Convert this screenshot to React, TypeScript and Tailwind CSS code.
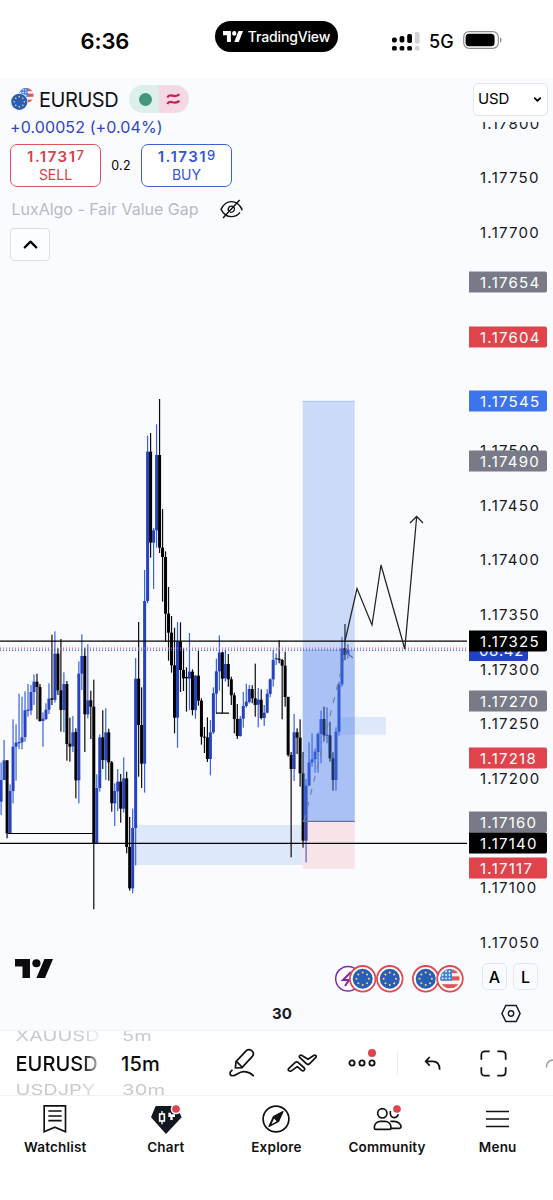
import React from 'react';
import { ChevronDown, ChevronUp } from 'lucide-react';

// [high, bodyTop, bodyBottom, low, isUp] in third-pixels measured from y = 590
type Candle = [number, number, number, number, 0 | 1];

const CANDLES: Candle[] = [
  [517, 570, 635, 675, 1], [450, 511, 570, 570, 1], [511, 511, 730, 745, 0], [583, 603, 730, 730, 1],
  [388, 470, 603, 640, 1], [403, 458, 470, 572, 1], [311, 456, 460, 477, 1], [320, 442, 457, 478, 1],
  [304, 361, 441, 455, 1], [282, 359, 363, 380, 1], [285, 306, 361, 375, 1], [253, 275, 306, 345, 1],
  [251, 275, 291, 388, 0], [282, 291, 393, 395, 0], [367, 386, 393, 470, 1], [340, 359, 387, 390, 1],
  [280, 326, 359, 372, 1], [134, 325, 329, 345, 0], [124, 191, 330, 338, 1], [175, 191, 301, 315, 0],
  [147, 301, 360, 425, 0], [247, 282, 360, 427, 1], [273, 282, 462, 512, 0], [383, 461, 470, 515, 0],
  [378, 427, 469, 486, 1], [415, 426, 571, 625, 0], [214, 251, 571, 640, 1], [133, 198, 251, 300, 1],
  [173, 198, 373, 486, 0], [163, 331, 373, 385, 1], [302, 331, 350, 447, 0], [269, 350, 760, 958, 0],
  [553, 594, 760, 760, 1], [433, 442, 594, 605, 1], [361, 442, 510, 537, 0], [355, 427, 511, 570, 1],
  [416, 427, 517, 572, 0], [513, 517, 640, 665, 0], [580, 603, 640, 708, 1], [537, 575, 604, 663, 1],
  [552, 575, 656, 698, 0], [502, 565, 656, 668, 1], [545, 565, 771, 790, 0], [681, 771, 895, 902, 0],
  [656, 714, 895, 910, 1], [204, 266, 714, 826, 1], [96, 266, 405, 560, 0], [292, 405, 521, 594, 0],
  [-60, 33, 521, 608, 1], [-463, -415, 33, 40, 1], [-471, -415, -142, -97, 0], [-186, -179, -142, -3, 1],
  [-497, -405, -179, -127, 1], [-573, -405, -127, -111, 0], [-243, -127, -99, 35, 0], [-116, -99, 71, 155, 0],
  [-9, 71, 128, 212, 0], [78, 128, 226, 248, 0], [113, 226, 383, 430, 0], [96, 154, 383, 473, 1],
  [97, 154, 240, 306, 0], [175, 240, 265, 303, 0], [232, 261, 265, 365, 0], [129, 245, 266, 360, 1],
  [238, 245, 360, 376, 0], [255, 257, 360, 386, 1], [183, 257, 332, 347, 0], [325, 332, 440, 464, 0],
  [411, 440, 443, 489, 0], [382, 442, 507, 516, 0], [390, 427, 507, 556, 1], [292, 310, 427, 432, 1],
  [206, 244, 311, 370, 1], [136, 188, 244, 302, 1], [185, 187, 266, 370, 0], [180, 222, 265, 275, 1],
  [192, 222, 268, 290, 0], [260, 268, 316, 345, 0], [308, 316, 387, 430, 0], [342, 387, 438, 447, 0],
  [378, 386, 438, 440, 1], [306, 348, 386, 413, 1], [281, 335, 348, 353, 1], [285, 297, 336, 340, 1],
  [286, 297, 325, 340, 0], [221, 325, 345, 380, 0], [294, 329, 344, 412, 1], [298, 329, 384, 388, 0],
  [345, 368, 384, 408, 1], [298, 311, 368, 370, 1], [265, 268, 312, 322, 1], [180, 210, 268, 290, 1],
  [190, 204, 208, 225, 1], [151, 206, 210, 220, 0], [207, 210, 227, 388, 0], [185, 227, 321, 350, 0],
  [320, 321, 495, 500, 0], [486, 495, 537, 802, 0], [372, 427, 537, 573, 1], [415, 427, 443, 492, 0],
  [388, 443, 550, 590, 0], [486, 550, 752, 773, 0], [567, 587, 752, 817, 1], [457, 517, 587, 587, 1],
  [430, 508, 517, 530, 1], [475, 485, 508, 548, 1], [427, 432, 486, 548, 1], [362, 387, 432, 520, 1],
  [350, 387, 436, 452, 0], [352, 434, 438, 460, 1], [395, 436, 505, 515, 0], [487, 505, 570, 602, 0],
  [412, 425, 570, 602, 1], [275, 283, 425, 437, 1], [140, 175, 283, 290, 1], [102, 174, 195, 210, 0],
  [162, 180, 192, 205, 1],
];

const CHART_TOP = 79;
const TICKS = [117800, 117750, 117700, 117500, 117450, 117400, 117350, 117300, 117250, 117200, 117100, 117050];

const MARKS = [
  { price: 117654, tone: 'bg-[#787b87]' },
  { price: 117604, tone: 'bg-[#e0434b]' },
  { price: 117545, tone: 'bg-[#3d74ee]' },
  { price: 117490, tone: 'bg-[#787b87]' },
  { price: 117325, tone: 'bg-black' },
  { price: 117270, tone: 'bg-[#787b87]' },
  { price: 117218, tone: 'bg-[#e0434b]' },
  { price: 117160, tone: 'bg-[#787b87]' },
  { price: 117140, tone: 'bg-black' },
  { price: 117117, tone: 'bg-[#e0434b]' },
];

const priceToY = (price: number) => 177.4 + (117750 - price) * 1.0917 - CHART_TOP;
const formatPrice = (price: number) => (price / 100000).toFixed(5);

const TvLogo = ({ className }: { className: string }) => (
  <svg viewBox="0 4 35.5 18" preserveAspectRatio="none" className={className} fill="currentColor">
    <path d="M14 22H7V11H0V4h14v18zM28 22h-8l7.5-18h8L28 22z" />
    <circle cx="20" cy="8" r="3.8" />
  </svg>
);

const EuCoin = ({ cx, cy, r }: { cx: number; cy: number; r: number }) => (
  <g>
    <circle cx={cx} cy={cy} r={r} fill="#2a5db5" />
    {Array.from({ length: 8 }, (_, i) => (
      <circle
        key={i}
        cx={cx + Math.cos((i * Math.PI) / 4) * r * 0.62}
        cy={cy + Math.sin((i * Math.PI) / 4) * r * 0.62}
        r={r * 0.1}
        fill="#f2e36a"
      />
    ))}
  </g>
);

const UsCoin = ({ cx, cy, r, id }: { cx: number; cy: number; r: number; id: string }) => (
  <g>
    <clipPath id={id}>
      <circle cx={cx} cy={cy} r={r} />
    </clipPath>
    <g clipPath={`url(#${id})`}>
      <rect x={cx - r} y={cy - r} width={r * 2} height={r * 2} fill="#f7f3f5" />
      {[-1, -0.25, 0.55].map((k) => (
        <rect key={k} x={cx - r} y={cy + k * r} width={r * 2} height={r * 0.42} fill="#dc5757" />
      ))}
      <rect x={cx - r} y={cy - r} width={r * 1.2} height={r * 1.2} fill="#3f86d9" />
      {[0, 1, 2].map((i) =>
        [0, 1, 2].map((j) => (
          <circle key={`${i}${j}`} cx={cx - r * 0.75 + i * r * 0.35} cy={cy - r * 0.75 + j * r * 0.35} r={r * 0.09} fill="#fff" />
        ))
      )}
    </g>
  </g>
);

const StatusBar = () => (
  <header className="flex h-[79px] shrink-0 bg-white">
    <div className="w-[215px] pl-[80.5px] pt-[25px] text-[22px] leading-8 font-semibold tracking-[-0.1px]">6:36</div>
    <div className="mt-[21px] flex h-[31px] w-[123px] items-center justify-center gap-[5px] rounded-full bg-black text-white">
      <TvLogo className="h-[11px] w-[20px]" />
      <span className="text-[14px] font-medium tracking-[-0.15px]">TradingView</span>
    </div>
    <div className="flex items-start pl-[54px] pt-[31px]">
      <svg width="28" height="20" viewBox="0 0 28 20" className="mt-px">
        {[0, 7.6, 15.2, 22.8].map((x, i) => (
          <g key={x} fill={i === 3 ? '#d2d2d4' : '#000'}>
            <rect x={x} y={[5.5, 4, 2, 0][i]} width="4.8" height={[5, 6.5, 9, 11.5][i]} rx="1.8" />
            <rect x={x} y="14" width="4.8" height="4.6" rx="1.6" />
          </g>
        ))}
      </svg>
      <span className="ml-[9px] text-[18px] leading-[22px] font-medium">5G</span>
      <svg width="40" height="18" viewBox="0 0 40 18" className="ml-[9px]">
        <rect x="0.7" y="0.7" width="34.6" height="16.6" rx="5.4" fill="none" stroke="#8e8e90" strokeWidth="1.2" />
        <rect x="2.6" y="2.7" width="29" height="12.6" rx="3.6" fill="#000" />
        <path d="M37 6.2c2 .6 2 5 0 5.6z" fill="#8e8e90" />
      </svg>
    </div>
  </header>
);

const ChartCanvas = () => (
  <svg className="absolute inset-0" width="553" height="951" viewBox="0 79 553 951">
    {/* Demand zones */}
    <rect x="134" y="825" width="168.7" height="40" fill="#dde8fa" />
    <rect x="340" y="717" width="46" height="17.7" fill="#dde8fa" />

    {/* Price action */}
    {CANDLES.map(([high, top, bottom, low, up], i) => {
      const x = 1.1 + i * 2.99;
      return (
        <g key={i}>
          <rect x={x - 0.6} y={590 + high / 3} width="1.2" height={(low - high) / 3} fill={up ? '#3a63dc' : '#0c0c0c'} />
          <rect x={x - 1.5} y={590 + top / 3} width="3" height={(bottom - top) / 3} fill={up ? '#2443bd' : '#000'} />
        </g>
      );
    })}

    {/* Long position */}
    <rect x="302.7" y="401" width="52" height="420.6" fill="#4276ec" fillOpacity="0.25" />
    <rect x="302.7" y="649.5" width="52" height="172" fill="#4276ec" fillOpacity="0.25" />
    <rect x="302.7" y="821.6" width="52" height="47.2" fill="#e0434b" fillOpacity="0.12" />
    <path d="M302.7 401.3h52" stroke="#9cb8ee" strokeWidth="0.7" />
    <path d="M302.7 821.4h52" stroke="#6c7590" strokeWidth="1.1" />
    <path d="M304 821L345.5 653" stroke="#77809c" strokeWidth="1.2" strokeDasharray="6 7.5" />
    <path d="M344 660l2-8 7 6" stroke="#5b6a95" strokeWidth="1.1" fill="none" />

    {/* Levels */}
    <path d="M0 641.2h467M0 843.3h467" stroke="#000" strokeWidth="1.2" />
    <path d="M8 833.5h86M216 713.1h13" stroke="#000" strokeWidth="1.1" />
    <path d="M0 648.2h467" stroke="#b96aa8" strokeWidth="1.3" strokeDasharray="1.1 1.9" />
    <path d="M0 650.1h467" stroke="#3656c8" strokeWidth="1.2" strokeDasharray="1.1 1.9" />

    {/* Projection */}
    <path d="M345 641l12-52.5 15 36.5 9-60 23.8 84 11.8-131.5M410 523l6.6-6.5 6.4 6.5" stroke="#222" strokeWidth="1.25" fill="none" />

    {/* Economic events */}
    <circle cx="348" cy="978.8" r="12.3" fill="#fff" stroke="#8328ad" strokeWidth="1.5" />
    <path d="M351 972l-8 8h6l-4 6" stroke="#8328ad" strokeWidth="2" fill="none" />
    {[362.7, 389.8, 425.7, 450].map((cx, i) => (
      <g key={cx}>
        <circle cx={cx} cy="978.8" r="12.8" fill="#fff" stroke="#dc4a50" strokeWidth="1.8" />
        {i < 3 ? <EuCoin cx={cx} cy={978.8} r={10} /> : <UsCoin cx={cx} cy={978.8} r={9.8} id="us-event" />}
      </g>
    ))}
    <path d="M505.8 1005.5h10.4l3.9 8-3.9 8h-10.4l-3.9-8z" stroke="#16181d" strokeWidth="1.5" fill="none" strokeLinejoin="round" />
    <circle cx="511" cy="1013.5" r="2.7" stroke="#16181d" strokeWidth="1.4" fill="none" />
  </svg>
);

const PriceAxis = () => (
  <div className="absolute top-0 right-0 h-full w-[84px] text-[15px] leading-[21px] tracking-[1.25px] text-[#15171c]">
    <div className="absolute inset-0 [clip-path:inset(43px_0_0_0)]">
      {TICKS.map((price) => (
        <span key={price} className="absolute left-[11px] -translate-y-1/2" style={{ top: priceToY(price) }}>
          {formatPrice(price)}
        </span>
      ))}
    </div>
    <span className="absolute top-[561px] left-0 h-[21px] w-[59px] rounded-r-[2px] bg-[#2242c4] pl-[10px] tracking-[0.6px] text-white">08:42</span>
    {MARKS.map(({ price, tone }) => (
      <span
        key={price}
        className={`absolute left-0 h-[21px] w-[78px] -translate-y-1/2 rounded-r-[2px] pl-[11px] text-white ${tone}`}
        style={{ top: priceToY(price) }}
      >
        {formatPrice(price)}
      </span>
    ))}
  </div>
);

interface QuoteProps {
  price: string;
  pip: string;
  label: string;
  tone: string;
}

const Quote = ({ price, pip, label, tone }: QuoteProps) => (
  <button className={`flex h-[43px] w-[91px] flex-col items-center rounded-[7px] border-[1.5px] bg-white pt-[2px] ${tone}`}>
    <span className="flex text-[15px] leading-[19px] font-semibold tracking-[1.5px]">
      {price}
      <span className="text-[13px] leading-[17px] font-medium tracking-normal">{pip}</span>
    </span>
    <span className="text-[14px] leading-[17px]">{label}</span>
  </button>
);

const Legend = () => (
  <div className="relative flex w-[260px] flex-col pl-[10px] pt-[6px]">
    <div className="flex h-[28px] items-center">
      <svg width="24" height="26" viewBox="0 0 24 26">
        <UsCoin cx={16.2} cy={9.5} r={7.5} id="us-legend" />
        <circle cx="9.3" cy="15.8" r="8.9" fill="#fafbff" />
        <EuCoin cx={9.3} cy={15.8} r={8.1} />
      </svg>
      <span className="ml-[5px] w-[90px] pt-px text-[20px] tracking-[-0.45px] text-[#101216]">EURUSD</span>
      <span className="flex h-[28px] w-[60px] overflow-hidden rounded-full">
        <span className="flex w-[30px] items-center justify-center bg-[#dcefed]">
          <span className="ml-[3px] size-[13px] rounded-full bg-[#42967d]" />
        </span>
        <span className="flex w-[30px] items-center bg-[#f5d8e6] pl-[7px]">
          <svg width="15" height="13" viewBox="0 0 15 13" stroke="#bf235c" strokeWidth="2.2" fill="none">
            <path d="M1.3 4.4C4-1.2 8 6.5 13.5 1.3M1.3 11C4 5.4 8 13 13.5 7.9" />
          </svg>
        </span>
      </span>
    </div>
    <div className="mt-[3px] text-[16px] leading-[22px] tracking-[0.1px] whitespace-nowrap text-[#2f46b8]">+0.00052 (+0.04%)</div>
    <div className="mt-[6px] flex items-center">
      <Quote price="1.1731" pip="7" label="SELL" tone="border-[#dd555c] text-[#d5414a]" />
      <span className="w-[40px] pt-px text-center text-[12.5px] tracking-[0.3px]">0.2</span>
      <Quote price="1.1731" pip="9" label="BUY" tone="border-[#3f61d8] text-[#3455dc]" />
    </div>
    <div className="mt-[10px] flex h-[24px] items-center whitespace-nowrap text-[#b8babf]">
      <span className="w-[209px] pl-[1.5px] text-[16px] tracking-[-0.02px]">LuxAlgo - Fair Value Gap</span>
      <svg width="25" height="20" viewBox="0 0 75 60" stroke="#111" strokeWidth="4.2" fill="none">
        <path d="M6 31C14 15 24 8 37 8s24 7 32 23C61 46 51 53 37 53S14 46 6 31z" strokeDasharray="86 7 400" />
        <path d="M29 37c-5-10 3-18 13-15M45 24c5 9-2 17-12 16M12 57L62 3" />
      </svg>
    </div>
    <button className="mt-[7px] flex h-[33px] w-[40px] items-center justify-center rounded-[4px] border border-[#dcdee4] bg-[#fcfdff]">
      <ChevronUp size={23} strokeWidth={2.3} />
    </button>
  </div>
);

const ChartPanel = () => (
  <main className="relative h-[951px] shrink-0 overflow-hidden bg-[#fafbff]">
    <ChartCanvas />
    <PriceAxis />
    <Legend />
    <button className="absolute top-[4px] right-[5px] flex h-[33px] w-[75px] items-center justify-between rounded-[5px] border border-[#e4e5ea] bg-white pr-[4px] pl-[4px] text-[15px] tracking-[-0.2px]">
      USD
      <ChevronDown size={11} strokeWidth={4} />
    </button>
    <TvLogo className="absolute top-[880px] left-[15px] h-[19px] w-[38px] text-[#0c0c0e]" />
    <div className="absolute top-[884px] right-[15px] flex gap-[6px] text-[16px] leading-[26px] font-medium">
      <button className="h-[27px] w-[25px] rounded-[5px] border border-[#e6e7ec]">A</button>
      <button className="h-[27px] w-[25px] rounded-[5px] border border-[#e6e7ec]">L</button>
    </div>
    <span className="absolute top-[925px] left-[272px] text-[15px] leading-5 font-bold text-[#16181d]">30</span>
  </main>
);

const Toolbar = () => (
  <div className="flex h-[66px] shrink-0 items-center overflow-hidden border-y border-[#f0f1f5] bg-white">
    <div className="flex w-[211px] text-[20px] leading-[24px] font-medium text-[#0d0d0f]">
      <div className="w-[121px] pl-[15.5px] [mask-image:linear-gradient(90deg,#000_82px,transparent_106px)]">
        <div className="h-[24px] w-[90px] origin-bottom scale-y-[0.72] font-normal text-[#cacaca]">XAUUSD</div>
        <div className="mt-[7px] mb-[5px] tracking-[0.05px]">EURUSD</div>
        <div className="h-[24px] w-[90px] origin-top scale-y-[0.72] font-normal text-[#cacaca]">USDJPY</div>
      </div>
      <div>
        <div className="h-[24px] origin-bottom scale-y-[0.72] pl-[1px] font-normal text-[#cacaca]">5m</div>
        <div className="mt-[7px] mb-[5px] tracking-[0.2px]">15m</div>
        <div className="h-[24px] origin-top scale-y-[0.72] pl-[1px] font-normal tracking-[0.3px] text-[#cacaca]">30m</div>
      </div>
    </div>
    <button className="flex w-[61px] justify-center">
      <svg width="28" height="30" viewBox="683 84 84 90" fill="none" stroke="#111" strokeWidth="5.2" strokeLinejoin="round" strokeLinecap="round">
        <path d="M705 144l2-19 31-33c6-5 11-4 16 0 6 5 7 11 2 17l-31 34zM709 125l16 16" />
        <path d="M695 151c-8 5-8 14 0 16 12 3 20-15 38-12 10 1 18 4 26 12" />
      </svg>
    </button>
    <button className="flex w-[59px] justify-center">
      <svg width="30" height="20" viewBox="30 98 90 60" fill="none" stroke="#111" strokeWidth="5.2" strokeLinejoin="round" strokeLinecap="round">
        <path d="M35 145l19-18c3-3 7-3 10 0l18 16c4 5-3 11-8 7L61 139l-17 12c-7 4-13-2-9-6z" />
        <path d="M68 111c-3-5 3-9 8-5l17 11 16-11c6-4 12 1 7 6L98 130c-3 3-7 3-10 0z" />
      </svg>
    </button>
    <button className="relative flex w-[61px] justify-center">
      <svg width="28" height="8" viewBox="0 0 28 8" fill="none" stroke="#111" strokeWidth="1.9">
        <circle cx="4" cy="4" r="2.6" />
        <circle cx="14" cy="4" r="2.6" />
        <circle cx="24" cy="4" r="2.6" />
      </svg>
      <span className="absolute -top-[10px] right-[16px] size-[8px] rounded-full bg-[#e0434b]" />
    </button>
    <span className="ml-[5px] h-[24px] w-px bg-[#eceded]" />
    <button className="flex w-[68px] justify-center">
      <svg width="17" height="14" viewBox="442 108 51 42" fill="none" stroke="#111" strokeWidth="5">
        <path d="M459 111l-12 13 12 13M448 124h20c13 0 21 9 21 25" />
      </svg>
    </button>
    <button className="flex w-[54px] justify-center">
      <svg width="27" height="27" viewBox="0 0 81 81" fill="none" stroke="#111" strokeWidth="5.2">
        <path d="M4 29V15Q4 4 15 4h14M52 4h14q11 0 11 11v14M77 52v14q0 11-11 11H52M29 77H15Q4 77 4 66V52" />
      </svg>
    </button>
    <svg width="8" height="10" viewBox="0 0 8 10" className="ml-auto" fill="none" stroke="#999" strokeWidth="1.5">
      <path d="M1.5 9.5C1.5 5 4 2 8 2" />
    </svg>
  </div>
);

const NAV_ITEMS = [
  {
    label: 'Watchlist',
    icon: (
      <svg width="30" height="30" viewBox="121 251 90 90" fill="none" stroke="#111" strokeWidth="5">
        <path d="M133.5 256.500h64v78l-32-14-32 14zM146 272h40M146 287h40M146 301h40" />
      </svg>
    ),
  },
  {
    label: 'Chart',
    icon: (
      <svg width="32" height="30" viewBox="449 251 96 90">
        <path d="M466 257h62l16 34-47 50-45-50z" fill="#131722" />
        <path d="M485 272v40" stroke="#fff" strokeWidth="4" />
        <rect x="478" y="281" width="14" height="21" fill="#131722" stroke="#fff" strokeWidth="5" />
        <path d="M504 277h8v5h12v8h-7v9h-7v-9h-6z" fill="#fff" />
        <circle cx="527" cy="266" r="16" fill="#fff" />
        <circle cx="527" cy="266" r="11.5" fill="#e0434b" />
      </svg>
    ),
  },
  {
    label: 'Explore',
    icon: (
      <svg width="30" height="30" viewBox="0 0 30 30">
        <circle cx="15" cy="15" r="12.9" fill="none" stroke="#111" strokeWidth="1.7" />
        <path d="M22 7.500l-4.500 10-9.500 5 4.500-10z" fill="#111" stroke="#111" strokeWidth="1.3" strokeLinejoin="round" />
        <path d="M10.500 20.200l2.600-5.600 2.600 2.600z" fill="#fff" />
      </svg>
    ),
  },
  {
    label: 'Community',
    icon: (
      <svg width="30" height="30" viewBox="289 251 90 90" fill="none" stroke="#111" strokeWidth="5">
        <circle cx="320" cy="279" r="14" />
        <path d="M344 272c-2 14 5 21 13 20 6-1 9-4 11-10" />
        <path d="M296 322c0-12 8-19 19-19h12c11 0 19 7 19 19 0 4-1 5-5 5h-40c-4 0-5-1-5-5zM344 303h11c13 0 21 8 21 17 0 3-1 4-5 4h-24" />
        <circle cx="364" cy="266" r="11.5" fill="#e0434b" stroke="none" />
      </svg>
    ),
  },
  {
    label: 'Menu',
    icon: (
      <svg width="30" height="30" viewBox="0 0 30 30" stroke="#111" strokeWidth="1.7">
        <path d="M3 7.500h23M3 15h23M3 22.500h23" />
      </svg>
    ),
  },
];

const BottomNav = () => (
  <nav className="grid h-[104px] shrink-0 grid-cols-5 bg-white pt-[8px]">
    {NAV_ITEMS.map(({ label, icon }) => (
      <button key={label} className="flex flex-col items-center text-[13.5px] leading-[18px] font-semibold tracking-[0.2px] text-[#111]">
        {icon}
        <span className="mt-[4px]">{label}</span>
      </button>
    ))}
  </nav>
);

export default function App() {
  return (
    <div className="flex h-[1200px] w-[553px] flex-col overflow-hidden bg-white font-['Inter',sans-serif] text-black">
      <StatusBar />
      <ChartPanel />
      <Toolbar />
      <BottomNav />
    </div>
  );
}
